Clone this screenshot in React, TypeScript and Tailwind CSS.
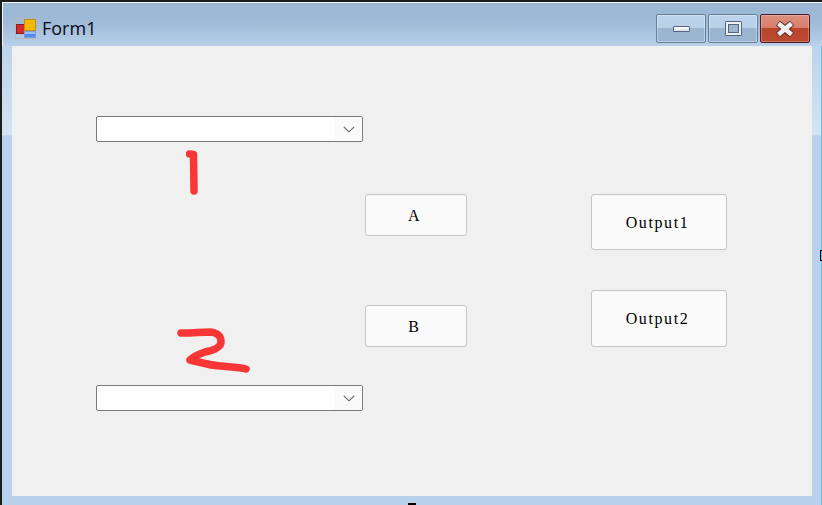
function AppIcon() {
  return (
    <svg width="22" height="21" viewBox="0 0 22 21" className="shrink-0">
      <rect x="0.5" y="0.5" width="20" height="20" fill="none" stroke="#b4b8bc" />
      <rect x="1.5" y="6.5" width="8" height="9" fill="#d9262a" stroke="#8d1a1c" />
      <rect x="9.5" y="1.5" width="11" height="11" fill="#f5b800" stroke="#b98f22" />
      <rect x="9.5" y="13.5" width="11" height="6" fill="#4f8dee" stroke="#7f9fc8" />
      <rect x="10" y="14" width="10" height="2" fill="#9cc0f5" />
    </svg>
  );
}

function CaptionButton({ kind }: { kind: "min" | "max" | "close" }) {
  const close = kind === "close";
  return (
    <div
      className={
        close
          ? "relative flex h-[29px] w-[50px] items-center justify-center rounded-[2px] border border-[#4d1a28] bg-[linear-gradient(#dc8f7e_0%,#d5806c_46%,#b9432c_50%,#bb4a30_100%)] shadow-[inset_0_0_0_1px_rgba(255,255,255,0.25)]"
          : "relative flex h-[29px] w-[50px] items-center justify-center rounded-[2px] border border-[#64809e] bg-[linear-gradient(#bcd3ea_0%,#b9d1e9_46%,#9bb4d0_50%,#9bb4d0_100%)] shadow-[inset_0_0_0_1px_rgba(255,255,255,0.35)]"
      }
    >
      {kind === "min" && (
        <div className="h-[6px] w-[17px] rounded-[1px] border border-[#53657c] bg-[linear-gradient(#ffffff,#d8dde3)]" />
      )}
      {kind === "max" && (
        <div className="h-[15px] w-[17px] rounded-[1px] border border-[#53657c] bg-[#eef1f4] p-[2px]">
          <div className="h-full w-full border border-[#53657c] bg-[#9db6d1]" />
        </div>
      )}
      {close && (
        <svg width="20" height="16" viewBox="0 0 20 16">
          <path d="M3 2 L17 14 M17 2 L3 14" stroke="#6b2b2a" strokeWidth="6.5" />
          <path d="M3.5 2.5 L16.5 13.5 M16.5 2.5 L3.5 13.5" stroke="#eef0f2" strokeWidth="4.5" />
        </svg>
      )}
    </div>
  );
}

function ComboBox() {
  return (
    <div className="flex h-[26px] w-[267px] items-stretch overflow-hidden rounded-[2px] border border-[#7a7a7a] bg-white">
      <div className="flex-1" />
      <div className="flex w-[28px] items-center justify-center bg-[#fafafa] pl-[2px]">
        <svg width="12" height="7" viewBox="0 0 12 7">
          <path d="M0.8 0.8 L6 5.8 L11.2 0.8" fill="none" stroke="#606060" strokeWidth="1.1" />
        </svg>
      </div>
    </div>
  );
}

function FormButton({ label, className }: { label: string; className: string }) {
  return (
    <div
      className={`flex items-center justify-center rounded-[3px] border border-[#c6c6c6] bg-[#fafafa] pr-[3px] pt-[1px] font-['Liberation_Serif',serif] text-[16px] tracking-[1.6px] text-black ${className}`}
    >
      {label}
    </div>
  );
}

export default function App() {
  return (
    <div className="relative flex h-[505px] w-[822px] flex-col overflow-hidden border-t-2 border-l-2 border-[#1c1c1c] bg-[#b9d1ea]">
      {/* title bar */}
      <div className="flex h-[44px] shrink-0 items-center justify-between border-t border-l border-[#f2f6fa] bg-[linear-gradient(#9cb7d3_0%,#9fbad6_45%,#b9d1ea_100%)] pl-[12px] pr-[12px]">
        <div className="flex items-center gap-[5px] pt-[7px]">
          <AppIcon />
          <span className="font-['Open_Sans',sans-serif] text-[18px] leading-none text-[#0a0a14]">Form1</span>
        </div>
        <div className="mt-[8px] flex gap-[2px]">
          <CaptionButton kind="min" />
          <CaptionButton kind="max" />
          <CaptionButton kind="close" />
        </div>
      </div>

      <div className="flex min-h-0 flex-1">
        <div className="flex w-[10px] shrink-0 flex-col">
          <div className="h-[90px] border-b border-[#c4d8ec] bg-[linear-gradient(#bdd4eb,#d3e3f3)]" />
        </div>

        {/* client area */}
        <div className="flex h-[450px] w-[800px] shrink-0 bg-[#f0f0f0] pl-[84px] pt-[70px]">
          <div className="flex h-[295px] w-[267px] flex-col">
            <ComboBox />
            <svg width="16" height="48" viewBox="0 0 16 48" className="ml-[90px] mt-[6px]">
              <path d="M3.5 6 L7.5 6.5 L8 43" fill="none" stroke="#f93636" strokeWidth="7.5" strokeLinecap="round" strokeLinejoin="round" />
            </svg>
            <svg width="76" height="48" viewBox="0 0 76 48" className="ml-[79px] mt-[130px]">
              <path
                d="M6 7 C15 7.5 25 6 35 6 C44 7 46 11 46 16 C46 21 40 24 30 26 C24 28 19 30 15 34 C24 36 33 39 45 40 C55 41 64 41 71 43"
                fill="none"
                stroke="#f93636"
                strokeWidth="7.5"
                strokeLinecap="round"
                strokeLinejoin="round"
              />
            </svg>
            <div className="mt-[11px]">
              <ComboBox />
            </div>
          </div>

          <div className="ml-[2px] flex w-[102px] flex-col pt-[78px]">
            <FormButton label="A" className="h-[42px]" />
            <FormButton label="B" className="mt-[69px] h-[42px]" />
          </div>

          <div className="ml-[124px] flex w-[136px] flex-col pt-[78px]">
            <FormButton label="Output1" className="h-[56px]" />
            <FormButton label="Output2" className="mt-[40px] h-[57px]" />
          </div>
        </div>

        <div className="flex flex-1 flex-col border-r border-[#58c8ee]">
          <div className="h-[90px] border-b border-[#c4d8ec] bg-[linear-gradient(#bdd4eb,#d3e3f3)]" />
        </div>
      </div>

      {/* bits of the capture's edge */}
      <div className="absolute left-[818px] top-[248px] h-[11px] w-[3px] border border-r-0 border-black" />
      <div className="absolute left-[406px] top-[501px] h-[2px] w-[8px] bg-black" />
    </div>
  );
}
